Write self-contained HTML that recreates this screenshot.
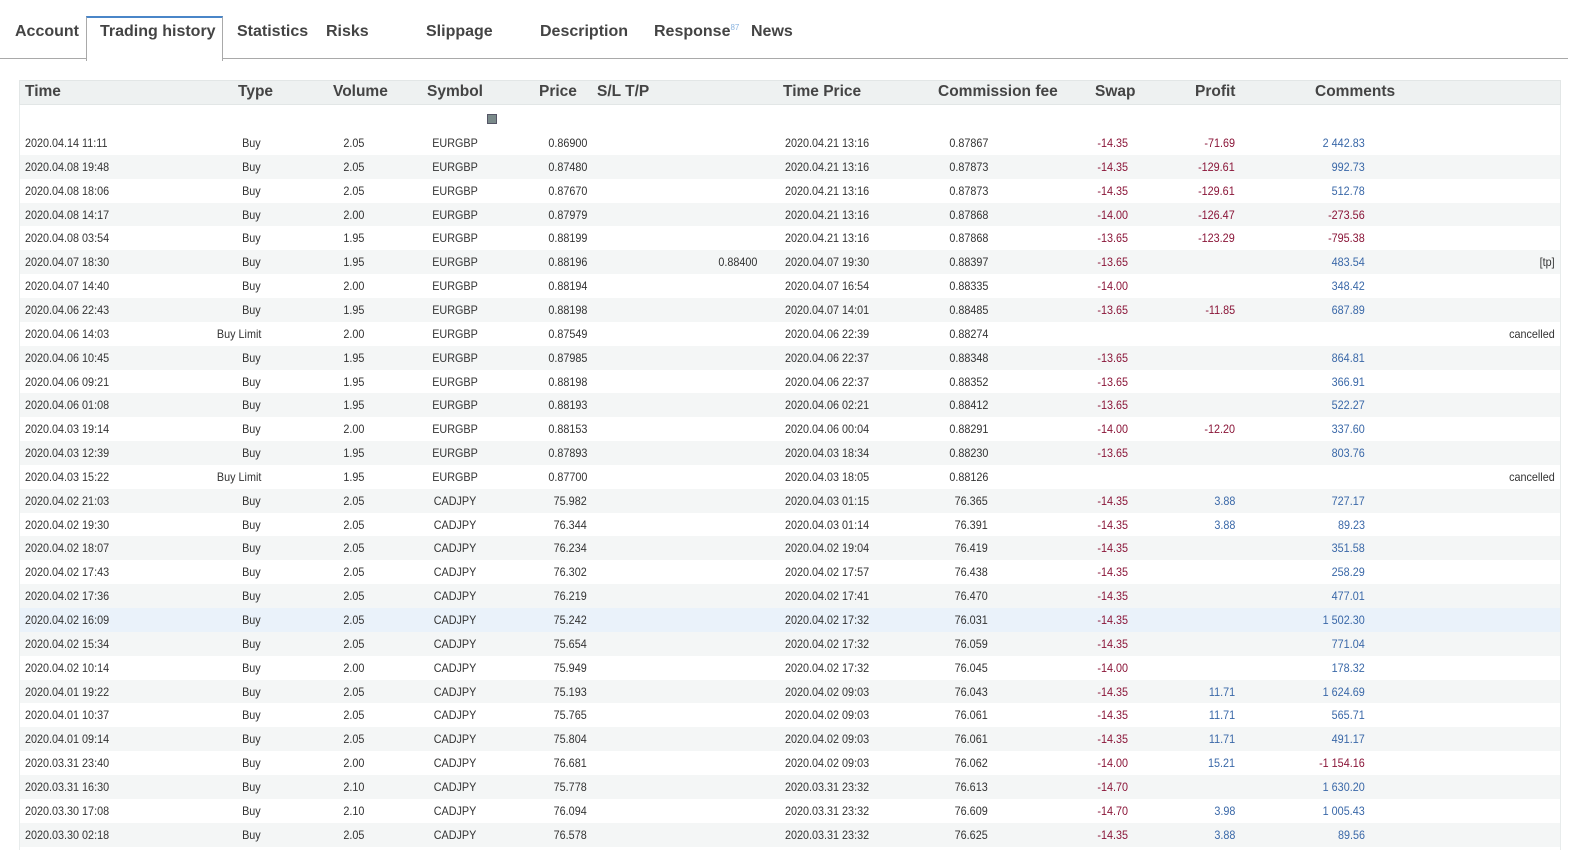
<!DOCTYPE html>
<html style="overflow:hidden;width:1578px;height:855px"><head><meta charset="utf-8"><style>
html,body{margin:0;padding:0}
body{width:1578px;height:855px;background:#fff;overflow:hidden;font-family:"Liberation Sans",sans-serif;position:relative}
.tabline{position:absolute;left:0;top:58px;width:1568px;height:1px;background:#a9a9a9}
.tab{position:absolute;top:23px;font-weight:bold;font-size:16px;color:#444}
.act{position:absolute;left:86px;top:16px;width:135px;height:43px;border:1px solid #a9a9a9;border-top:2px solid #4a86c8;border-bottom:none;background:#fff}
.hdr{position:absolute;left:19px;top:80px;width:1540px;height:23px;background:#eef1f1;border:1px solid #e2e6e6}
.h{position:absolute;top:83px;font-weight:bold;font-size:15.5px;color:#444}
.tbl{position:absolute;left:19px;top:105px;width:1540px;height:745px;border-left:1px solid #e8ecec;border-right:1px solid #e8ecec}
.row{position:absolute;left:20px;width:1540px;height:24px}
.c{position:absolute;font-size:12px;color:#333;top:5px;white-space:nowrap;transform:scaleX(0.9)}
.l{transform-origin:left}.r{transform-origin:right}
.red{color:#8a1538}.blu{color:#3a68a8}
</style></head><body>
<div class="tabline"></div>
<div class="act"></div>
<div class="tab" style="left:15px">Account</div>
<div class="tab" style="left:100px">Trading history</div>
<div class="tab" style="left:237px">Statistics</div>
<div class="tab" style="left:326px">Risks</div>
<div class="tab" style="left:426px">Slippage</div>
<div class="tab" style="left:540px">Description</div>
<div class="tab" style="left:654px">Response<span style="font-size:8px;color:#8ab4e0;font-weight:normal;vertical-align:6px">87</span></div>
<div class="tab" style="left:751px">News</div>
<div class="tbl"></div>
<div class="hdr"></div>
<div class="h" style="left:25px">Time</div>
<div class="h" style="left:238px">Type</div>
<div class="h" style="left:333px">Volume</div>
<div class="h" style="left:427px">Symbol</div>
<div class="h" style="left:539px">Price</div>
<div class="h" style="left:597px">S/L T/P</div>
<div class="h" style="left:783px">Time Price</div>
<div class="h" style="left:938px">Commission fee</div>
<div class="h" style="left:1095px">Swap</div>
<div class="h" style="left:1195px">Profit</div>
<div class="h" style="left:1315px">Comments</div>
<div style="position:absolute;left:487px;top:114px;width:8px;height:8px;background:#7a8a8a;border:1px solid #556"></div>
<div id="rows"></div>
<script>
var d=[
["2020.04.14 11:11","Buy","2.05","EURGBP","0.86900","","2020.04.21 13:16","0.87867","-14.35","-71.69","2 442.83",""],
["2020.04.08 19:48","Buy","2.05","EURGBP","0.87480","","2020.04.21 13:16","0.87873","-14.35","-129.61","992.73",""],
["2020.04.08 18:06","Buy","2.05","EURGBP","0.87670","","2020.04.21 13:16","0.87873","-14.35","-129.61","512.78",""],
["2020.04.08 14:17","Buy","2.00","EURGBP","0.87979","","2020.04.21 13:16","0.87868","-14.00","-126.47","-273.56",""],
["2020.04.08 03:54","Buy","1.95","EURGBP","0.88199","","2020.04.21 13:16","0.87868","-13.65","-123.29","-795.38",""],
["2020.04.07 18:30","Buy","1.95","EURGBP","0.88196","0.88400","2020.04.07 19:30","0.88397","-13.65","","483.54","[tp]"],
["2020.04.07 14:40","Buy","2.00","EURGBP","0.88194","","2020.04.07 16:54","0.88335","-14.00","","348.42",""],
["2020.04.06 22:43","Buy","1.95","EURGBP","0.88198","","2020.04.07 14:01","0.88485","-13.65","-11.85","687.89",""],
["2020.04.06 14:03","Buy Limit","2.00","EURGBP","0.87549","","2020.04.06 22:39","0.88274","","","","cancelled"],
["2020.04.06 10:45","Buy","1.95","EURGBP","0.87985","","2020.04.06 22:37","0.88348","-13.65","","864.81",""],
["2020.04.06 09:21","Buy","1.95","EURGBP","0.88198","","2020.04.06 22:37","0.88352","-13.65","","366.91",""],
["2020.04.06 01:08","Buy","1.95","EURGBP","0.88193","","2020.04.06 02:21","0.88412","-13.65","","522.27",""],
["2020.04.03 19:14","Buy","2.00","EURGBP","0.88153","","2020.04.06 00:04","0.88291","-14.00","-12.20","337.60",""],
["2020.04.03 12:39","Buy","1.95","EURGBP","0.87893","","2020.04.03 18:34","0.88230","-13.65","","803.76",""],
["2020.04.03 15:22","Buy Limit","1.95","EURGBP","0.87700","","2020.04.03 18:05","0.88126","","","","cancelled"],
["2020.04.02 21:03","Buy","2.05","CADJPY","75.982","","2020.04.03 01:15","76.365","-14.35","3.88","727.17",""],
["2020.04.02 19:30","Buy","2.05","CADJPY","76.344","","2020.04.03 01:14","76.391","-14.35","3.88","89.23",""],
["2020.04.02 18:07","Buy","2.05","CADJPY","76.234","","2020.04.02 19:04","76.419","-14.35","","351.58",""],
["2020.04.02 17:43","Buy","2.05","CADJPY","76.302","","2020.04.02 17:57","76.438","-14.35","","258.29",""],
["2020.04.02 17:36","Buy","2.05","CADJPY","76.219","","2020.04.02 17:41","76.470","-14.35","","477.01",""],
["2020.04.02 16:09","Buy","2.05","CADJPY","75.242","","2020.04.02 17:32","76.031","-14.35","","1 502.30",""],
["2020.04.02 15:34","Buy","2.05","CADJPY","75.654","","2020.04.02 17:32","76.059","-14.35","","771.04",""],
["2020.04.02 10:14","Buy","2.00","CADJPY","75.949","","2020.04.02 17:32","76.045","-14.00","","178.32",""],
["2020.04.01 19:22","Buy","2.05","CADJPY","75.193","","2020.04.02 09:03","76.043","-14.35","11.71","1 624.69",""],
["2020.04.01 10:37","Buy","2.05","CADJPY","75.765","","2020.04.02 09:03","76.061","-14.35","11.71","565.71",""],
["2020.04.01 09:14","Buy","2.05","CADJPY","75.804","","2020.04.02 09:03","76.061","-14.35","11.71","491.17",""],
["2020.03.31 23:40","Buy","2.00","CADJPY","76.681","","2020.04.02 09:03","76.062","-14.00","15.21","-1 154.16",""],
["2020.03.31 16:30","Buy","2.10","CADJPY","75.778","","2020.03.31 23:32","76.613","-14.70","","1 630.20",""],
["2020.03.30 17:08","Buy","2.10","CADJPY","76.094","","2020.03.31 23:32","76.609","-14.70","3.98","1 005.43",""],
["2020.03.30 02:18","Buy","2.05","CADJPY","76.578","","2020.03.31 23:32","76.625","-14.35","3.88","89.56",""]];
var h="";
d.forEach(function(r,i){
var top=131+i*23.85;
var bg=i==20?"#eaf2fa":(i%2?"#f4f6f6":"#fff");
function L(x,t,c){return '<span class="c l '+(c||'')+'" style="left:'+(x-20)+'px">'+t+'</span>'}
function R(x,t,c){return '<span class="c r '+(c||'')+'" style="right:'+(1560-x)+'px">'+t+'</span>'}
function C(x,t){return '<span class="c" style="left:'+(x-20-40)+'px;width:80px;text-align:center">'+t+'</span>'}
var pc=r[9].charAt(0)=="-"?"red":"blu";
var cc=r[10].charAt(0)=="-"?"red":"blu";
h+='<div class="row" style="top:'+top+'px;background:'+bg+'">'+L(25,r[0])+R(261,r[1])+R(364,r[2])+C(455,r[3])+R(587,r[4])+R(757,r[5])+L(785,r[6])+R(988,r[7])+R(1128,r[8],"red")+R(1235,r[9],pc)+R(1365,r[10],cc)+R(1555,r[11])+'</div>';
});
document.getElementById("rows").innerHTML=h;
</script>
</body></html>
